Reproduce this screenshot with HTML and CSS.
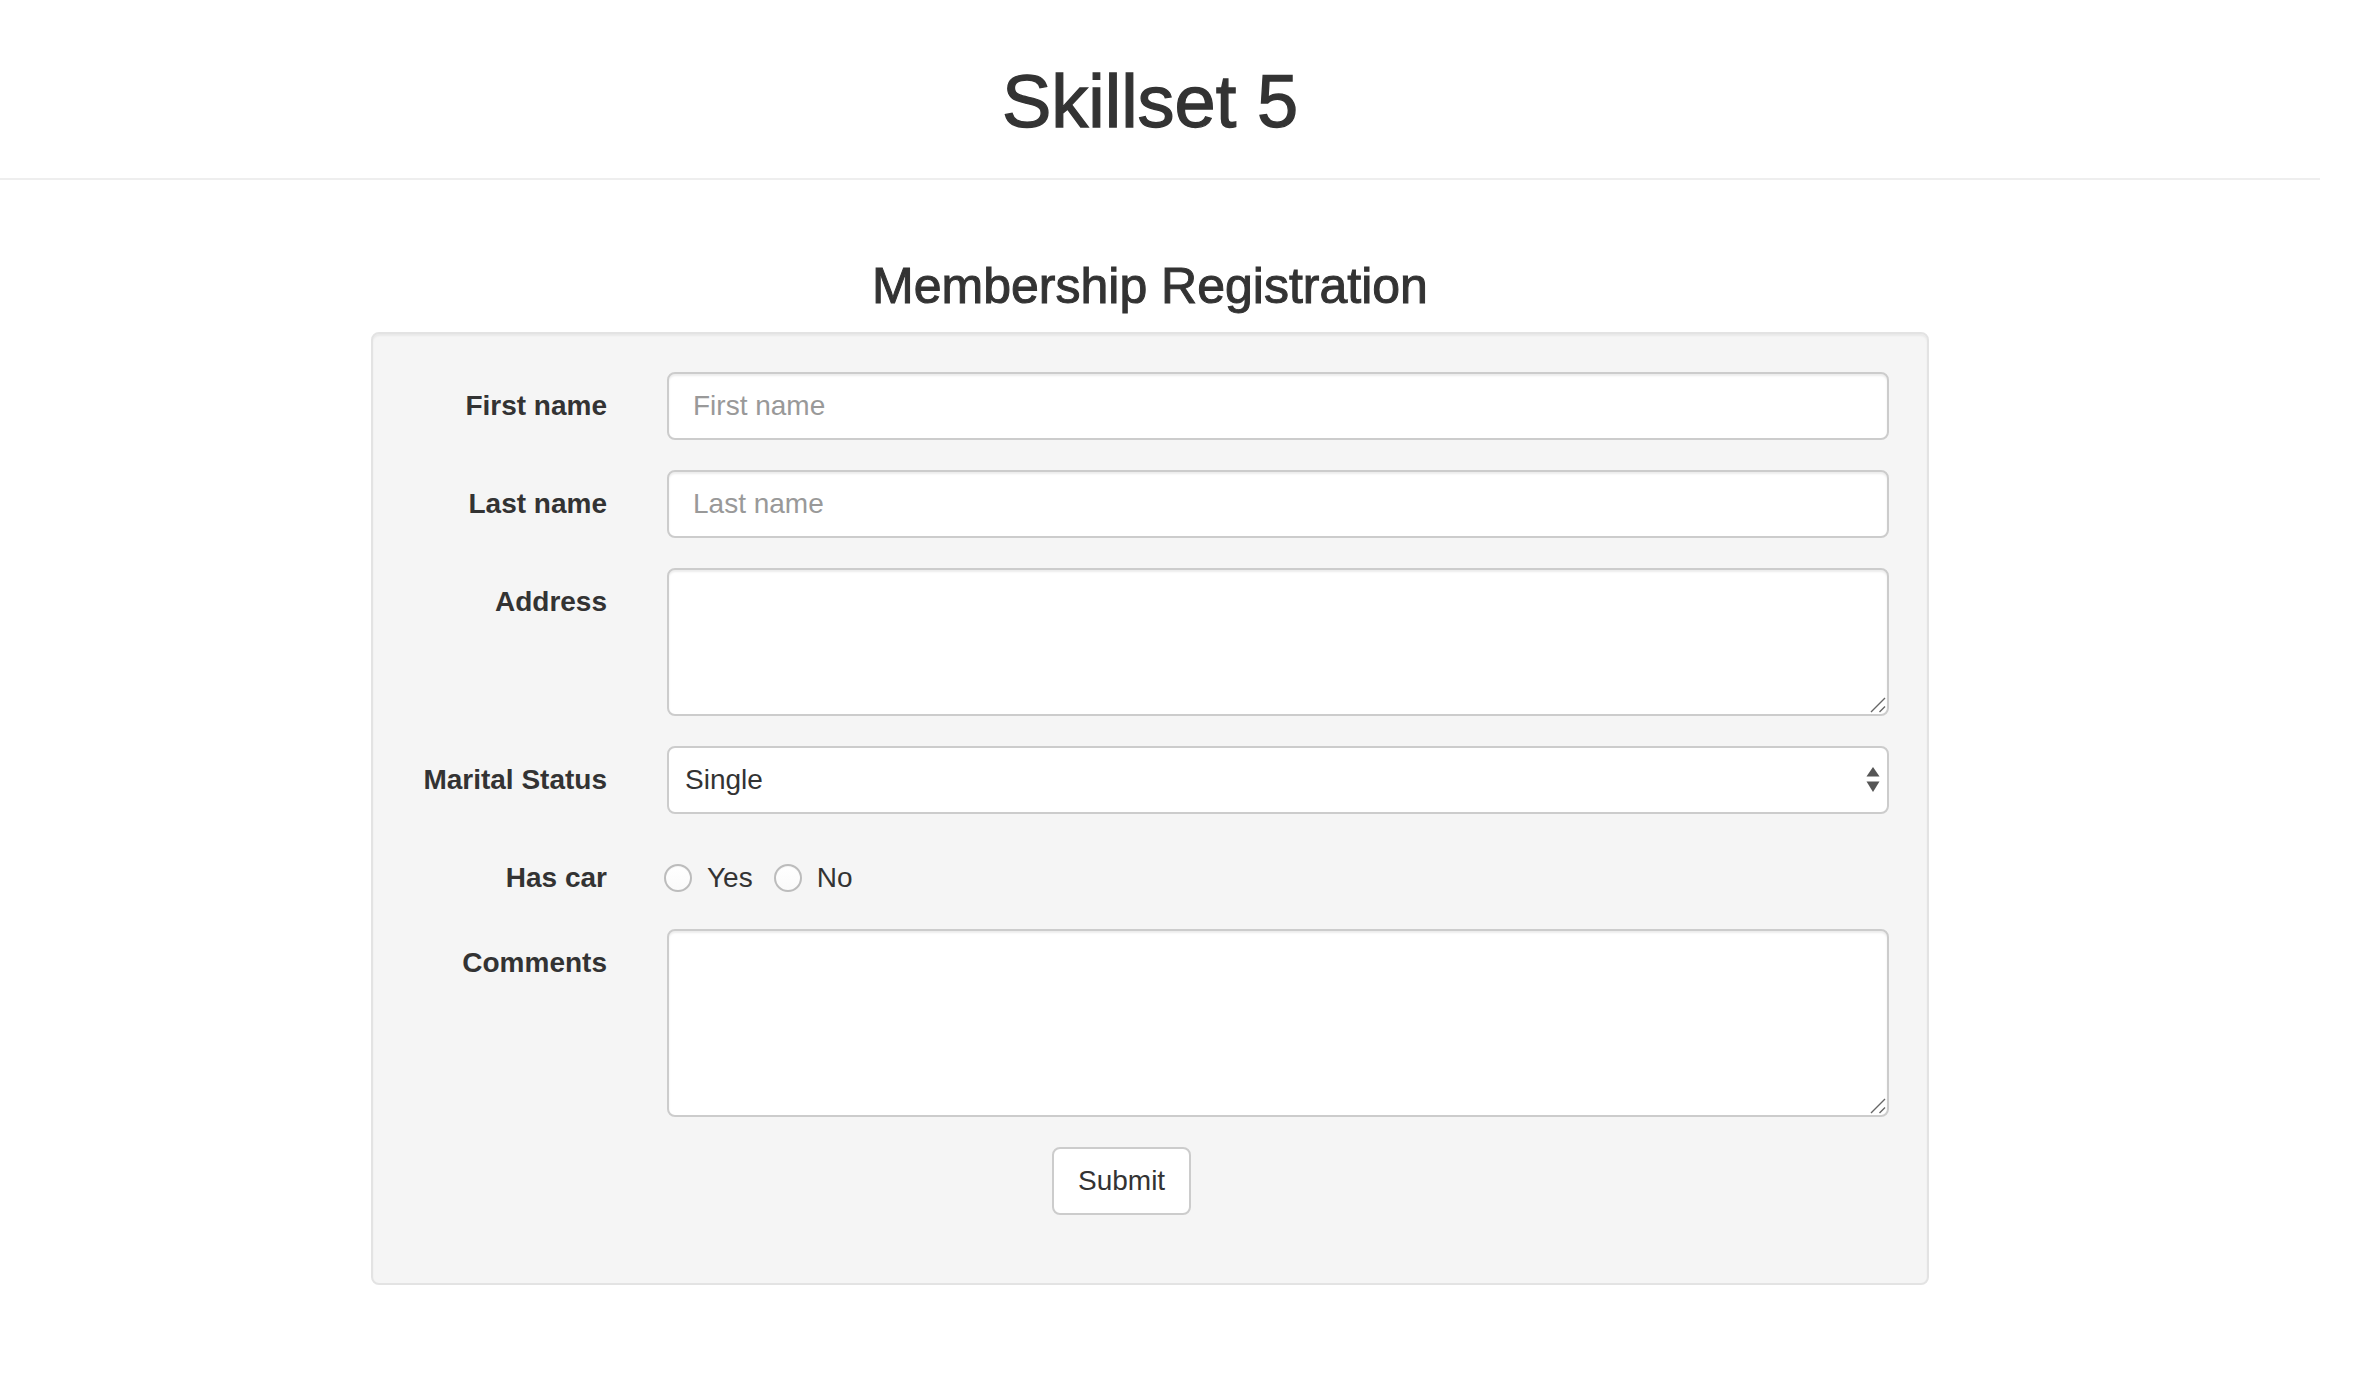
FILE: index.html
```html
<!DOCTYPE html>
<html lang="en">
<head>
<meta charset="utf-8">
<title>Skillset 5</title>
<link rel="stylesheet" href="styles.css">
</head>
<body>
<div class="page">
  <header class="page-header">
    <h1 class="site-title">Skillset 5</h1>
  </header>
  <main class="main">
    <h3 class="form-title">Membership Registration</h3>
    <div class="well">
      <form class="reg-form">
        <div class="form-row">
          <label class="row-label" for="fname">First name</label>
          <input class="control" id="fname" type="text" placeholder="First name">
        </div>
        <div class="form-row">
          <label class="row-label" for="lname">Last name</label>
          <input class="control" id="lname" type="text" placeholder="Last name">
        </div>
        <div class="form-row">
          <label class="row-label" for="address">Address</label>
          <div class="area-wrap">
            <textarea class="control area-3" id="address"></textarea>
            <svg class="grip" width="16" height="16" viewBox="0 0 16 16" aria-hidden="true">
              <path d="M1 15 L15 1 M9.5 15 L15 9.5" stroke="#666" stroke-width="1.4" fill="none"/>
            </svg>
          </div>
        </div>
        <div class="form-row">
          <label class="row-label" for="marital">Marital Status</label>
          <div class="select-wrap">
            <select class="control select" id="marital">
              <option>Single</option>
              <option>Married</option>
              <option>Divorced</option>
              <option>Widowed</option>
            </select>
            <svg class="select-arrows" width="14" height="26" viewBox="0 0 14 26" aria-hidden="true">
              <path d="M7 0 L13.5 9.5 L0.5 9.5 Z" fill="#555"/>
              <path d="M0.5 14.5 L13.5 14.5 L7 25 Z" fill="#555"/>
            </svg>
          </div>
        </div>
        <div class="form-row">
          <span class="row-label">Has car</span>
          <div class="radios">
            <label class="radio-item radio-first"><input class="radio" type="radio" name="car"><span>Yes</span></label>
            <label class="radio-item"><input class="radio" type="radio" name="car"><span>No</span></label>
          </div>
        </div>
        <div class="form-row">
          <label class="row-label" for="comments">Comments</label>
          <div class="area-wrap">
            <textarea class="control area-4" id="comments"></textarea>
            <svg class="grip" width="16" height="16" viewBox="0 0 16 16" aria-hidden="true">
              <path d="M1 15 L15 1 M9.5 15 L15 9.5" stroke="#666" stroke-width="1.4" fill="none"/>
            </svg>
          </div>
        </div>
        <div class="submit-row">
          <button class="btn" type="submit">Submit</button>
        </div>
      </form>
    </div>
  </main>
</div>
</body>
</html>
```
FILE: styles.css
```css
html, body {
  margin: 0;
  padding: 0;
  background: #fff;
}

body {
  font-family: "Liberation Sans", Arial, Helvetica, sans-serif;
  font-size: 28px;
  line-height: 40px;
  color: #333;
}

.page {
  width: 2320px;
}

.page-header {
  padding: 62px 20px 36px 0;
  border-bottom: 2px solid #eee;
}

.site-title {
  margin: 0;
  font-size: 74px;
  line-height: 80px;
  font-weight: 500;
  text-align: center;
  color: #333;
  -webkit-text-stroke: 1.3px #333;
}

.main {
  width: 2300px;
  padding-top: 80px;
}

.form-title {
  margin: 0 0 20px;
  font-size: 50px;
  line-height: 52px;
  font-weight: 500;
  text-align: center;
  color: #333;
  -webkit-text-stroke: 1px #333;
}

.well {
  box-sizing: border-box;
  width: 1558px;
  margin: 0 auto;
  padding: 38px 38px 68px;
  background: #f5f5f5;
  border: 2px solid #e3e3e3;
  border-radius: 8px;
  box-shadow: inset 0 2px 2px rgba(0, 0, 0, 0.05);
}

.reg-form {
  display: flex;
  flex-direction: column;
  gap: 30px;
}

.form-row {
  display: grid;
  grid-template-columns: 196px 1fr;
  column-gap: 60px;
  align-items: start;
}

.row-label {
  padding-top: 14px;
  font-weight: 700;
  text-align: right;
  line-height: 40px;
  color: #333;
}

.control {
  box-sizing: border-box;
  display: block;
  width: 100%;
  height: 68px;
  margin: 0;
  padding: 12px 24px;
  font-family: inherit;
  font-size: 28px;
  line-height: 40px;
  color: #555;
  background: #fff;
  border: 2px solid #ccc;
  border-radius: 8px;
  box-shadow: inset 0 2px 2px rgba(0, 0, 0, 0.075);
  outline: none;
}

.control::placeholder {
  color: #999;
  opacity: 1;
}

.area-wrap {
  position: relative;
}

.area-3 {
  height: 148px;
  resize: none;
}

.area-4 {
  height: 188px;
  resize: none;
}

.grip {
  position: absolute;
  right: 3px;
  bottom: 3px;
  pointer-events: none;
}

.select-wrap {
  position: relative;
}

.select {
  -webkit-appearance: none;
  appearance: none;
  padding: 12px 40px 12px 16px;
  color: #333;
  box-shadow: none;
}

.select-arrows {
  position: absolute;
  right: 9px;
  top: 21px;
  pointer-events: none;
}

.radios {
  display: flex;
  align-items: flex-start;
  height: 55px;
  padding-top: 14px;
  box-sizing: border-box;
}

.radio-item {
  display: flex;
  align-items: center;
  height: 40px;
  margin-left: 21px;
  color: #333;
}

.radio-first {
  margin-left: -3px;
}

.radio {
  -webkit-appearance: none;
  appearance: none;
  box-sizing: border-box;
  width: 28px;
  height: 28px;
  margin: 0 15px 0 0;
  border: 2px solid #bcbcbc;
  border-radius: 50%;
  background: linear-gradient(#fff, #fafafa);
  box-shadow: inset 0 1px 1px rgba(0, 0, 0, 0.04);
}

.submit-row {
  padding-left: 641px;
}

.btn {
  box-sizing: border-box;
  height: 68px;
  padding: 12px 24px;
  font-family: inherit;
  font-size: 28px;
  line-height: 40px;
  color: #333;
  background: #fff;
  border: 2px solid #ccc;
  border-radius: 8px;
  cursor: pointer;
}
```
